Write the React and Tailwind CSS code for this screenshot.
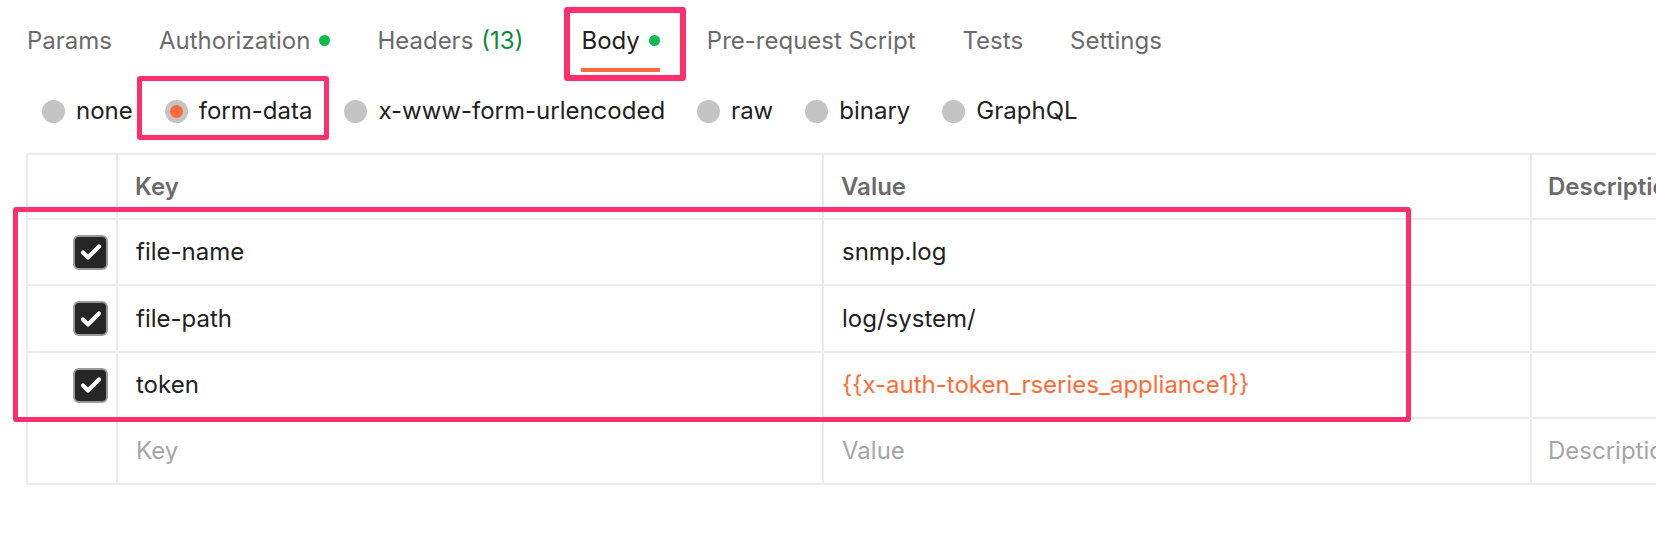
import React from "react";

const tabs = [
  { name: "Params" },
  { name: "Authorization", dot: true },
  { name: "Headers", count: "(13)" },
  { name: "Body", dot: true, active: true },
  { name: "Pre-request Script" },
  { name: "Tests" },
  { name: "Settings" },
];

const bodyTypes = ["none", "form-data", "x-www-form-urlencoded", "raw", "binary", "GraphQL"];

const rows = [
  { key: "file-name", value: "snmp.log", h: "h-[66px]" },
  { key: "file-path", value: "log/system/", h: "h-[67px]" },
  { key: "token", value: "{{x-auth-token_rseries_appliance1}}", variable: true, h: "h-[66px]" },
];

function Checkbox() {
  return (
    <div className="w-[35px] h-[35px] rounded-[6px] bg-[#262626] border-2 border-[#9a9a9a] flex items-center justify-center">
      <svg width="26" height="26" viewBox="0 0 26 26" fill="none">
        <path d="M5 13.5l5 5L21 7.5" stroke="#fff" strokeWidth="4.2" strokeLinecap="round" strokeLinejoin="round" />
      </svg>
    </div>
  );
}

function Radio({ checked }) {
  return (
    <span className="w-[23px] h-[23px] rounded-full bg-[#c4c4c4] flex items-center justify-center shrink-0">
      {checked && <span className="w-[13px] h-[13px] rounded-full bg-[#ff6c37]" />}
    </span>
  );
}

export default function App() {
  return (
    <div className="relative w-[1656px] h-[536px] bg-white overflow-hidden font-['Inter','Noto_Sans',sans-serif] text-[24px] text-[#212121]">
      {/* Tabs */}
      <div className="flex items-start pl-[27px] gap-[47px] h-[74px]">
        {tabs.map((t) => (
          <div
            key={t.name}
            className={`flex items-center h-[72px] pt-[13px] ${
              t.active
                ? "ml-[11px] border-b-4 border-[#ff6c37] text-[#212121]"
                : "border-b-4 border-transparent text-[#6b6b6b]"
            }`}
          >
            <span>{t.name}</span>
            {t.count && <span className="ml-[8px] text-[#0d8a3c]">{t.count}</span>}
            {t.dot && <span className="ml-[9px] w-[11px] h-[11px] rounded-full bg-[#0cbb52]" />}
          </div>
        ))}
      </div>

      {/* Body type radios */}
      <div className="flex items-center h-[74px] pl-[42px] gap-[32px]">
        {bodyTypes.map((b) => (
          <label key={b} className="flex items-center gap-[11px] leading-none">
            <Radio checked={b === "form-data"} />
            <span>{b}</span>
          </label>
        ))}
      </div>

      {/* Key/value table */}
      <div className="mt-[5px] ml-[26px] w-[1800px] border-l-2 border-t-2 border-[#ebebeb]">
        <div className="grid grid-cols-[90px_706px_708px_1fr] h-[65px]">
          <div className="border-r-2 border-b-2 border-[#ebebeb]" />
          <div className="border-r-2 border-b-2 border-[#ebebeb] flex items-center pl-[17px] font-semibold text-[#6b6b6b]">Key</div>
          <div className="border-r-2 border-b-2 border-[#ebebeb] flex items-center pl-[17px] font-semibold text-[#6b6b6b]">Value</div>
          <div className="border-r-2 border-b-2 border-[#ebebeb] flex items-center pl-[16px] font-semibold text-[#6b6b6b]">Description</div>
        </div>
        {rows.map((r) => (
          <div key={r.key} className={`grid grid-cols-[90px_706px_708px_1fr] ${r.h}`}>
            <div className="border-r-2 border-b-2 border-[#ebebeb] flex items-center justify-end pr-[8px]">
              <Checkbox />
            </div>
            <div className="border-r-2 border-b-2 border-[#ebebeb] flex items-center pl-[18px]">{r.key}</div>
            <div className={`border-r-2 border-b-2 border-[#ebebeb] flex items-center pl-[18px] ${r.variable ? "text-[#ff6c37]" : ""}`}>
              {r.value}
            </div>
            <div className="border-r-2 border-b-2 border-[#ebebeb]" />
          </div>
        ))}
        <div className="grid grid-cols-[90px_706px_708px_1fr] h-[66px] text-[#a6a6a6]">
          <div className="border-r-2 border-b-2 border-[#ebebeb]" />
          <div className="border-r-2 border-b-2 border-[#ebebeb] flex items-center pl-[18px]">Key</div>
          <div className="border-r-2 border-b-2 border-[#ebebeb] flex items-center pl-[18px]">Value</div>
          <div className="border-r-2 border-b-2 border-[#ebebeb] flex items-center pl-[16px]">Description</div>
        </div>
      </div>

      {/* Annotation boxes */}
      <div className="absolute left-[564px] top-[7px] w-[122px] h-[74px] border-[6px] border-[#ff2f6e] rounded-[3px] pointer-events-none" />
      <div className="absolute left-[137px] top-[76px] w-[192px] h-[64px] border-[5px] border-[#ff2f6e] rounded-[3px] pointer-events-none" />
      <div className="absolute left-[13px] top-[207px] w-[1398px] h-[215px] border-[5px] border-[#ff2f6e] rounded-[3px] pointer-events-none" />
    </div>
  );
}
